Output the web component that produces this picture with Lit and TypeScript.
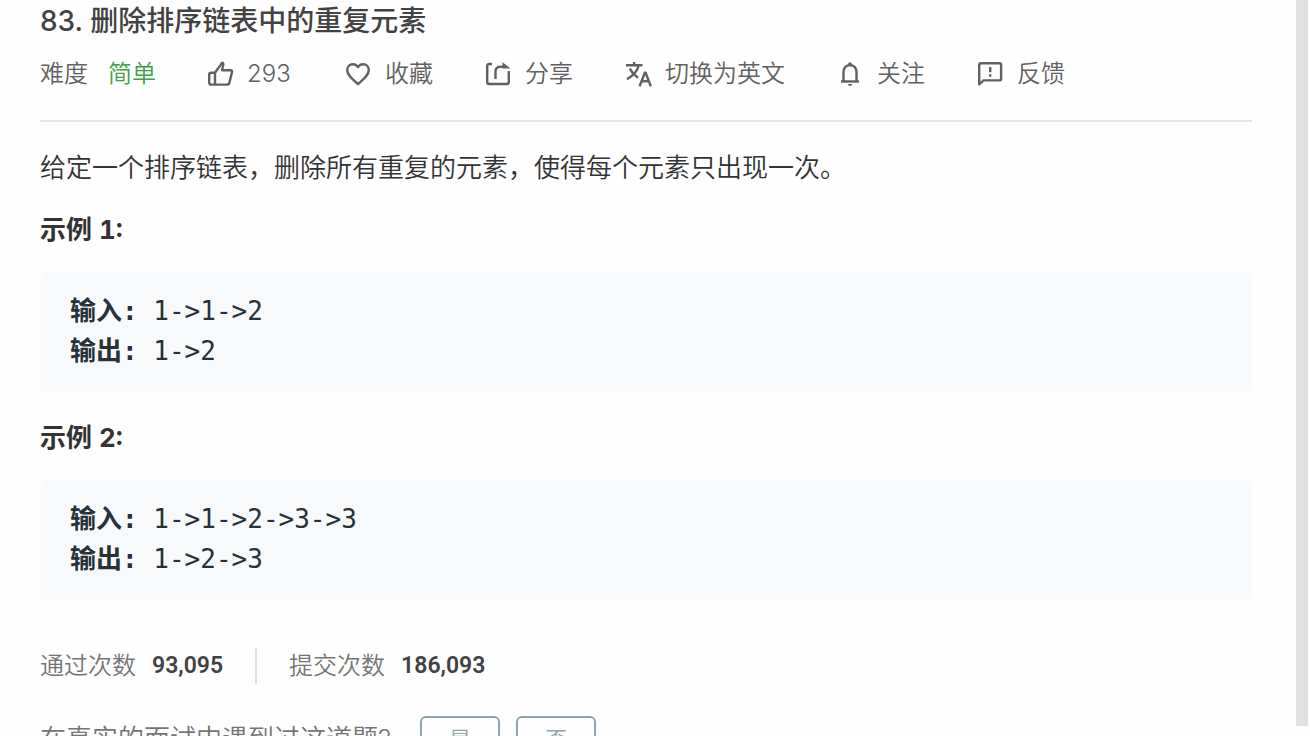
import { LitElement, html, css, svg } from "lit";
import { customElement, property } from "lit/decorators.js";

type Action = { icon: string; label: string };
type Example = { title: string; input: string; output: string };

const ICONS: Record<string, unknown> = {
  like: svg`<path d="M2.200 14.800q0-2 2-2H8L15.200 2.600Q16.600 3 16.200 5L15 10.200h8.600q1.900 0 1.400 1.900L22.400 22.600q-.6 2-2.500 2H4.200q-2 0-2-2zM8 12.800v11.800"/>`,
  heart: svg`<path d="M13 24.200C7.500 19.200 2.200 15.200 2.200 9.900 2.200 6.500 4.800 4.200 7.800 4.200c2.100 0 4 1.100 5.200 2.900 1.200-1.800 3.100-2.900 5.200-2.900 3 0 5.600 2.300 5.600 5.700 0 5.300-5.300 9.300-10.800 14.300z"/>`,
  share: svg`<path d="M7 4H4.200Q2.200 4 2.200 6v16q0 2 2 2h17.600q2 0 2-2V11"/><path d="M10.500 19V11.500q0-4.700 4.700-4.700H19"/><path class="solid" d="M17.500 2.200l8 6.200h-8z"/>`,
  translate: svg`<path d="M1 5.200h16.500M9.200 2v3.200M13.700 5.500C12.400 11 8.200 15.600 2 19.200M4.700 8.600c1.800 3.400 4.700 6.500 8.300 9.200M14.600 26.200l5.200-13.500h.8l5.200 13.500M16.600 21.300h7.200"/>`,
  bell: svg`<path d="M6.500 21.500v-9.300c0-4.200 2.500-7 6.500-7s6.500 2.800 6.500 7v9.300"/><path d="M4 21.500h18" /><path class="solid" d="M11.200 5V4q0-1.700 1.800-1.700T14.800 4v1zM10.700 24h4.600q-.4 2-2.300 2t-2.300-2z"/>`,
  feedback: svg`<path d="M2.200 24.500V5q0-1.700 1.700-1.700h18.500q1.700 0 1.700 1.700v13.700q0 1.700-1.700 1.700H6.500z"/><path d="M13.200 7v5.200M13.200 14.300v2.500"/>`,
};

@customElement("action-button")
class ActionButton extends LitElement {
  @property() icon = "";
  @property() label = "";

  static styles = css`
    :host { display: block; }
    .action {
      display: flex;
      align-items: center;
      gap: 12px;
      min-width: 86px;
      margin: 0;
      padding: 0;
      border: 0;
      background: none;
      color: #616161;
      font: 350 24px/32px Inter, "Noto Sans CJK SC", sans-serif;
      white-space: nowrap;
      cursor: pointer;
    }
    .icon {
      width: 28px;
      height: 28px;
      fill: none;
      stroke: currentColor;
      stroke-width: 2.4;
      stroke-linejoin: round;
    }
    .solid { fill: currentColor; stroke: none; }
  `;

  render() {
    return html`<button class="action" type="button">
      <svg class="icon" viewBox="0 0 28 28" aria-hidden="true">${ICONS[this.icon]}</svg>
      <span>${this.label}</span>
    </button>`;
  }
}

@customElement("app-root")
class AppRoot extends LitElement {
  private actions: Action[] = [
    { icon: "like", label: "293" },
    { icon: "heart", label: "收藏" },
    { icon: "share", label: "分享" },
    { icon: "translate", label: "切换为英文" },
    { icon: "bell", label: "关注" },
    { icon: "feedback", label: "反馈" },
  ];

  private examples: Example[] = [
    { title: "示例 1:", input: "1->1->2", output: "1->2" },
    { title: "示例 2:", input: "1->1->2->3->3", output: "1->2->3" },
  ];

  static styles = css`
    :host {
      display: flex;
      height: 100vh;
      overflow: hidden;
      background: #fefefe;
      color: #333;
      font: 350 26px/40px Inter, "Noto Sans CJK SC", sans-serif;
    }
    * { box-sizing: border-box; }
    .content { flex: 1; min-width: 0; padding: 0 44px 0 40px; }
    .track { flex: none; width: 12px; margin: 0 2px 10px 0; background: #e1e1e1; }
    .title { margin: 0; color: #424242; font-size: 28px; line-height: 42px; font-weight: 500; }
    .meta {
      display: flex;
      align-items: center;
      padding: 16px 0 30px;
      border-bottom: 2px solid #e6e6e6;
      color: #616161;
      font-size: 24px;
      line-height: 32px;
      white-space: nowrap;
    }
    .level { margin: 0 51px 0 20px; color: #43a047; }
    .actions { display: flex; gap: 52px; }
    .text { margin: 26px 0 0; }
    .heading {
      margin: 22px 0;
      font-size: 26px;
      line-height: 40px;
      font-weight: 700;
      font-variant-numeric: tabular-nums;
    }
    .sample {
      margin: 0 0 26px;
      padding: 19px 30px 21px;
      border-radius: 6px;
      background: #f7f9fb;
      color: #263238;
      font: 26px/40px "DejaVu Sans Mono", "Noto Sans CJK SC", monospace;
    }
    .stats {
      display: flex;
      align-items: center;
      margin: 48px 0 0;
      color: #757575;
      font-size: 24px;
      line-height: 36px;
      white-space: nowrap;
    }
    .stat { display: flex; gap: 16px; margin: 0; }
    .stat + .stat { margin-left: 32px; padding-left: 32px; border-left: 2px solid #e0e0e0; }
    .count { color: #424242; font-family: Roboto, sans-serif; font-size: 23px; font-weight: 600; }
    .survey { display: flex; align-items: center; gap: 16px; margin-top: 32px; color: #757575; }
    .question { margin-right: 13px; white-space: nowrap; }
    .answer {
      width: 80px;
      height: 46px;
      padding: 0;
      border: 2px solid #90a4ae;
      border-radius: 6px;
      background: none;
      color: #90a4ae;
      font: 350 22px/32px Inter, "Noto Sans CJK SC", sans-serif;
    }
  `;

  render() {
    return html`
      <main class="content">
        <h1 class="title">83. 删除排序链表中的重复元素</h1>
        <div class="meta">
          <span>难度</span><span class="level">简单</span>
          <div class="actions">
            ${this.actions.map((a) => html`<action-button .icon=${a.icon} .label=${a.label}></action-button>`)}
          </div>
        </div>
        <p class="text">给定一个排序链表，删除所有重复的元素，使得每个元素只出现一次。</p>
        ${this.examples.map(
          (e) => html`<h2 class="heading">${e.title}</h2>
            <pre class="sample"><strong>输入:</strong> ${e.input}
<strong>输出:</strong> ${e.output}</pre>`
        )}
        <div class="stats">
          <div class="stat"><span>通过次数</span><span class="count">93,095</span></div>
          <div class="stat"><span>提交次数</span><span class="count">186,093</span></div>
        </div>
        <div class="survey">
          <span class="question">在真实的面试中遇到过这道题?</span>
          <button class="answer" type="button">是</button>
          <button class="answer" type="button">否</button>
        </div>
      </main>
      <div class="track"></div>
    `;
  }
}
